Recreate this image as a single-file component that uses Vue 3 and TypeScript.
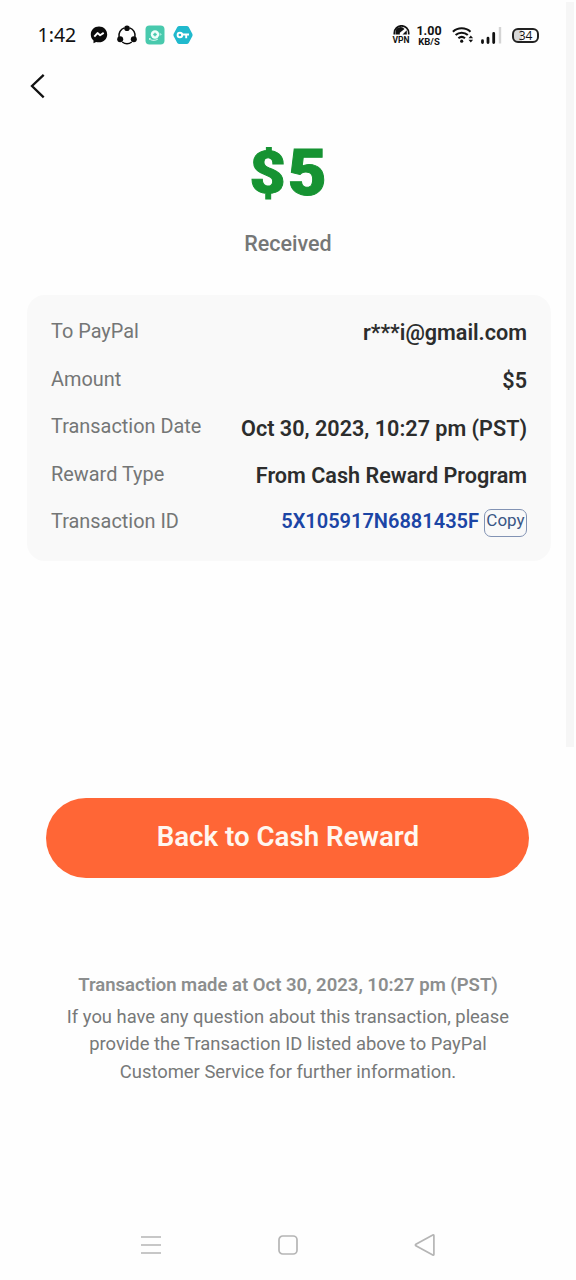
<script setup lang="ts">
interface DetailRow {
  label: string
  value: string
}

const rows: DetailRow[] = [
  { label: 'To PayPal', value: 'r***i@gmail.com' },
  { label: 'Amount', value: '$5' },
  { label: 'Transaction Date', value: 'Oct 30, 2023, 10:27 pm (PST)' },
  { label: 'Reward Type', value: 'From Cash Reward Program' },
]
const transactionId = '5X105917N6881435F'
const noteLines: string[] = [
  'If you have any question about this transaction, please',
  'provide the Transaction ID listed above to PayPal',
  'Customer Service for further information.',
]
</script>

<template>
  <div class="screen">
    <div class="scrollbar"></div>
    <header class="status">
      <span class="time">1:42</span>
      <svg class="messenger" width="18" height="18" viewBox="0 0 18 18">
        <path d="M9 .6C4.300.6.8 4 .8 8.500c0 2.500 1 4.500 2.700 6v2.700l2.600-1.300c.9.300 1.900.4 2.900.4 4.700 0 8.200-3.400 8.200-7.800S13.700.6 9 .6z" fill="#0b0b0b" />
        <path d="M4.300 10.700 7.500 7.100l2.600 2.200 3.600-2.400" fill="none" stroke="#fff" stroke-width="1.900" stroke-linejoin="round" />
      </svg>
      <svg class="share" width="20" height="20" viewBox="0 0 20 20">
        <g fill="none" stroke="#0b0b0b" stroke-width="1.500">
          <path d="M7.300 2.900A8 8 0 0 0 2.100 12" />
          <path d="M12.700 2.900A8 8 0 0 1 17.900 12" />
          <path d="M5.200 17a8 8 0 0 0 9.600 0" />
        </g>
        <g fill="#0b0b0b">
          <circle cx="10" cy="3.200" r="2.800" />
          <circle cx="3.200" cy="14.300" r="3" />
          <circle cx="16.800" cy="14.300" r="3" />
        </g>
      </svg>
      <svg class="app" width="20" height="20" viewBox="0 0 20 20">
        <rect x=".5" y=".5" width="19" height="19" rx="4" fill="#48c9ad" />
        <circle cx="10" cy="9.500" r="4.200" fill="#effffb" />
        <path d="M5.800 14.700q4 1.500 7-.7" fill="none" stroke="#c5f3e9" stroke-width="1.200" />
        <path d="M10 7.700v3.600M8.200 9.500h3.600" stroke="#48c9ad" stroke-width="1.500" />
        <path d="M14.500 7.500 17 9.400l-2.500 1.500z" fill="#9ee8d8" />
        <circle cx="4.900" cy="13.900" r=".9" fill="#effffb" />
      </svg>
      <svg class="key" width="20" height="20" viewBox="0 0 20 20">
        <path d="M6.300 1h7.400q1.300 0 2 1.100l3.600 6.700q.7 1.200 0 2.400l-3.600 6.700q-.7 1.100-2 1.100H6.300q-1.300 0-2-1.100L.7 11.200q-.7-1.200 0-2.400l3.600-6.700Q5 1 6.300 1z" fill="#20b9cd" />
        <g fill="none" stroke="#fff" stroke-width="1.900">
          <circle cx="6.900" cy="10" r="2.300" />
          <path d="M9 9.500h7M13.200 9.500v3.700" />
        </g>
      </svg>
      <span class="spacer"></span>
      <div class="vpn">
        <svg width="17" height="10" viewBox="0 0 17 10">
          <path d="M1.300 9.500V8a7.200 7.200 0 0 1 14.400 0v1.500" fill="none" stroke="#111" stroke-width="1.700" />
          <path d="M2.500 9.500V7.600a5 5 0 0 1 9-3.500L6.800 7.800v1.700zM13.800 5.300v4.200H9.500z" fill="#111" />
        </svg>
        <span>VPN</span>
      </div>
      <div class="speed"><span class="rate">1.00</span><span class="unit">KB/S</span></div>
      <svg class="wifi" width="22" height="18" viewBox="0 0 22 18">
        <g fill="none" stroke="#111" stroke-width="2.100">
          <path d="M.9 5.700a13 13 0 0 1 17.600 0" />
          <path d="M3.600 9.100a9 9 0 0 1 12.200 0" />
          <path d="M6.400 12.300a5 5 0 0 1 6.600 0" />
        </g>
        <circle cx="9.700" cy="15.200" r="1.600" fill="#111" />
        <path d="m16.500 12.200 2.300-2.700 2.300 2.700zM16.500 13.800l2.300 2.700 2.300-2.700z" fill="#111" />
      </svg>
      <svg class="signal" width="21" height="17" viewBox="0 0 21 17">
        <path d="M1.500 13.700v1.800M7 11.200v4.300M12.700 6.500v9" stroke="#111" stroke-width="2.800" stroke-linecap="round" />
        <path d="M19 0v16.500" stroke="#d4d4d4" stroke-width="2.400" />
      </svg>
      <div class="battery"><span>34</span></div>
    </header>

    <nav class="nav">
      <svg width="18" height="28" viewBox="0 0 18 28">
        <path d="M14.700 2.800 3 14l11.700 11.300" fill="none" stroke="#111" stroke-width="2.300" />
      </svg>
    </nav>

    <main>
      <h1 class="sum"><span class="currency">$</span>5</h1>
      <p class="received">Received</p>

      <section class="card">
        <div v-for="row in rows" :key="row.label" class="row">
          <span class="label">{{ row.label }}</span>
          <span class="value">{{ row.value }}</span>
        </div>
        <div class="row last">
          <span class="label">Transaction ID</span>
          <span class="id-group">
            <span class="value id">{{ transactionId }}</span>
            <button class="copy" type="button">Copy</button>
          </span>
        </div>
      </section>

      <button class="back" type="button">Back to Cash Reward</button>

      <footer class="note">
        <strong>Transaction made at Oct 30, 2023, 10:27 pm (PST)</strong>
        <span v-for="line in noteLines" :key="line">{{ line }}</span>
      </footer>
    </main>

    <div class="system-nav">
      <svg width="22" height="22" viewBox="0 0 22 22"><path d="M1 3h20M1 11h20M1 19h20" /></svg>
      <svg width="22" height="22" viewBox="0 0 22 22"><rect x="2" y="2" width="18" height="18" rx="3.800" /></svg>
      <svg width="22" height="24" viewBox="0 0 22 24"><path d="M19.900 2.700v18.600q0 1.200-1.100.6L1.900 12.800q-1-.8 0-1.600L18.800 2q1.100-.5 1.100.7z" /></svg>
    </div>
  </div>
</template>

<style>
body {
  background: #fefefe;
}
</style>

<style scoped>
.screen {
  position: relative;
  display: flex;
  flex-direction: column;
  box-sizing: border-box;
  width: 576px;
  height: 1280px;
  overflow: hidden;
  background: #fefefe;
  font-family: Roboto, "Liberation Sans", sans-serif;
}
.scrollbar {
  position: absolute;
  top: 2px;
  right: 2px;
  width: 8px;
  height: 745px;
  background: #f6f6f6;
}
.status {
  display: flex;
  align-items: center;
  box-sizing: border-box;
  height: 70px;
  padding: 0 37px 0 37.500px;
  color: #111;
}
.time {
  width: 52.500px;
  font-family: "Noto Sans", sans-serif;
  font-size: 19.500px;
  line-height: 24px;
  white-space: nowrap;
}
.share { margin-left: 9px; }
.app { margin-left: 8px; }
.key { margin-left: 8px; }
.spacer { flex: 1; }
.vpn,
.speed {
  display: flex;
  flex-direction: column;
  align-items: center;
  font-weight: 700;
}
.vpn {
  width: 18px;
  font-size: 8.500px;
  line-height: 10px;
}
.speed {
  width: 26px;
  margin-left: 6px;
  margin-right: 1px;
}
.rate {
  font-size: 12.500px;
  line-height: 12px;
}
.unit {
  font-size: 9.500px;
  line-height: 9px;
}
.wifi { margin-left: 9px; }
.signal { margin-left: 7px; }
.battery {
  display: flex;
  align-items: center;
  justify-content: center;
  box-sizing: border-box;
  width: 27px;
  height: 15px;
  margin-left: 10px;
  border: 2px solid #222;
  border-radius: 6px;
  background: linear-gradient(90deg, #d8d8d8 34%, #fefefe 34%);
  font-family: "Open Sans", sans-serif;
  font-size: 12px;
  line-height: 11px;
}
.nav {
  display: flex;
  height: 30px;
  padding: 2px 0 0 29px;
}
.sum {
  display: flex;
  align-items: baseline;
  justify-content: center;
  height: 80px;
  margin: 32px 0 0;
  color: #169332;
  font-size: 64.500px;
  font-weight: 900;
  line-height: 79px;
  -webkit-text-stroke: 1px #169332;
  transform: scaleX(1.040);
  /* Trims the dollar sign's bar to short stubs. */
  clip-path: inset(13px 0 14px);
}
.currency {
  margin-right: 2px;
  font-size: 60px;
  line-height: 60px;
  transform: translateY(-2px);
}
.received {
  margin: 17px 0 0;
  color: #757777;
  font-size: 21.500px;
  font-weight: 500;
  line-height: 26px;
  text-align: center;
}
.card {
  display: flex;
  flex-direction: column;
  box-sizing: border-box;
  width: 524px;
  height: 266px;
  margin: 38px 0 0 27px;
  padding: 14px 24px 0;
  border-radius: 18px;
  background: #f9f9f9;
}
.row {
  display: flex;
  align-items: center;
  justify-content: space-between;
  height: 47.700px;
  white-space: nowrap;
}
.label {
  padding-bottom: 3px;
  color: #747676;
  font-size: 19.900px;
}
.value {
  color: #2c2d2d;
  font-size: 21.600px;
  font-weight: 600;
}
.last { height: 45.500px; }
.id-group {
  display: flex;
  align-items: center;
  gap: 5px;
}
.id {
  padding-bottom: 4px;
  color: #1c45a5;
  font-size: 20px;
}
.copy {
  box-sizing: border-box;
  width: 43px;
  height: 28px;
  padding: 0 0 6px;
  border: 1px solid #8293b4;
  border-radius: 7px;
  background: transparent;
  color: #395685;
  font: 17px/20px Roboto, sans-serif;
}
.back {
  display: block;
  width: 483px;
  height: 80px;
  margin: 237px 0 0 46.400px;
  padding: 0 0 2px;
  border: 0;
  border-radius: 40px;
  background: #ff6636;
  color: #fff7f0;
  font: 600 27.700px/36px Roboto, sans-serif;
}
.note {
  display: flex;
  flex-direction: column;
  align-items: center;
  margin-top: 94px;
  color: #777979;
  font-size: 18.400px;
  line-height: 27.700px;
  white-space: nowrap;
}
.note strong {
  margin-bottom: 3px;
  color: #8c8e8e;
  font-size: 18.500px;
  font-weight: 600;
}
.system-nav {
  display: flex;
  align-items: center;
  justify-content: space-between;
  height: 70px;
  margin-top: auto;
  padding: 0 140px 0 139.500px;
}
.system-nav svg {
  fill: none;
  stroke: #b5b5b5;
  stroke-width: 1.700;
}
</style>
